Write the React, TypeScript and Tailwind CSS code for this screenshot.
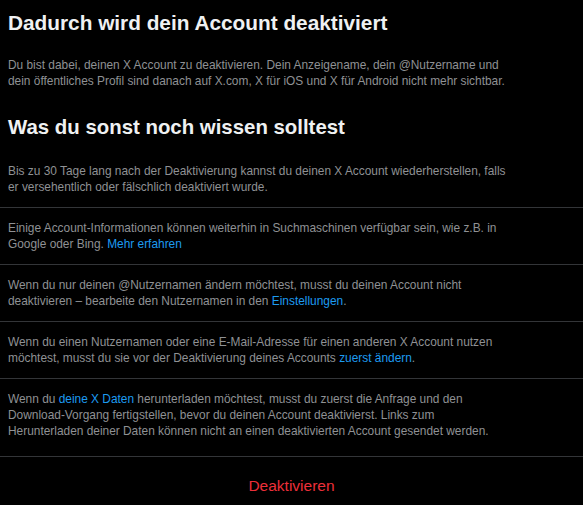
import React from 'react'

const Link = ({ children }: { children: React.ReactNode }) => (
  <span className="text-[#1d9bf0]">{children}</span>
)

const items: React.ReactNode[] = [
  <>Bis zu 30 Tage lang nach der Deaktivierung kannst du deinen X Account wiederherstellen, falls er versehentlich oder fälschlich deaktiviert wurde.</>,
  <>Einige Account-Informationen können weiterhin in Suchmaschinen verfügbar sein, wie z.B. in Google oder Bing. <Link>Mehr erfahren</Link></>,
  <>Wenn du nur deinen @Nutzernamen ändern möchtest, musst du deinen Account nicht deaktivieren – bearbeite den Nutzernamen in den <Link>Einstellungen</Link>.</>,
  <>Wenn du einen Nutzernamen oder eine E-Mail-Adresse für einen anderen X Account nutzen möchtest, musst du sie vor der Deaktivierung deines Accounts <Link>zuerst ändern</Link>.</>,
  <>Wenn du <Link>deine X Daten</Link> herunterladen möchtest, musst du zuerst die Anfrage und den Download-Vorgang fertigstellen, bevor du deinen Account deaktivierst. Links zum Herunterladen deiner Daten können nicht an einen deaktivierten Account gesendet werden.</>,
]

export default function App() {
  return (
    <div className="min-h-screen w-[583px] bg-black font-['Liberation_Sans',sans-serif]">
      <h1 className="pl-2 pt-[10px] text-[20.8px] font-bold leading-[26px] text-[#eff1f2]">Dadurch wird dein Account deaktiviert</h1>
      <p className="pl-2 pr-[72px] pt-[21px] text-[11.9px] leading-[16px] text-[#8f9194]">
        Du bist dabei, deinen X Account zu deaktivieren. Dein Anzeigename, dein @Nutzername und dein öffentliches Profil sind danach auf X.com, X für iOS und X für Android nicht mehr sichtbar.
      </p>
      <h2 className="mt-[25px] pl-2 text-[20.4px] font-bold leading-[26px] text-[#eff1f2]">Was du sonst noch wissen solltest</h2>
      <ul className="mt-[11px]">
        {items.map((it, i) => (
          <li
            key={i}
            className={`border-b border-[#333538] pl-2 pr-[72px] pt-[11.5px] text-[11.9px] leading-[16px] text-[#8f9194] ${i === items.length - 1 ? 'pb-[17.5px]' : 'pb-[12.5px]'}`}
          >
            {it}
          </li>
        ))}
      </ul>
      <div className="flex h-[58px] items-center justify-center">
        <button className="text-[15.5px] text-[#ec2f39]">Deaktivieren</button>
      </div>
    </div>
  )
}
